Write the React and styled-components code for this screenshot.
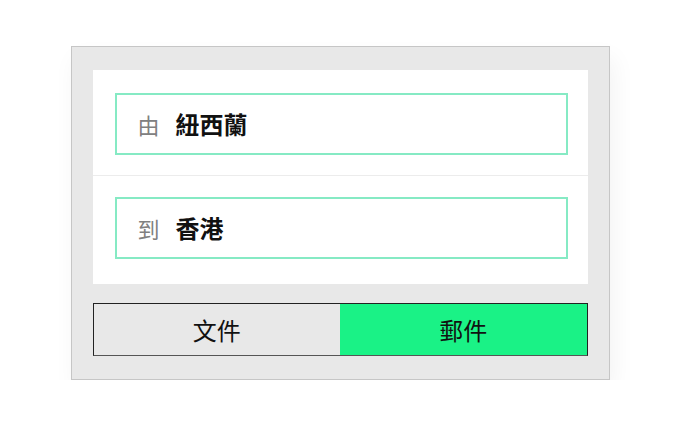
import React, { useState } from 'react';
import styled, { createGlobalStyle } from 'styled-components';

const GlobalStyle = createGlobalStyle`
    html, body {
        margin: 0;
        padding: 0;
        background: #ffffff;
    }
    body {
        font-family: "Noto Sans CJK TC", "Noto Sans", sans-serif;
    }
`

function App()
{
    const [type, setType] = useState('mail');

    return (
        <Page>
            <GlobalStyle />
            <Card>
                <Panel>
                    <Row>
                        <Field>
                            <Label>由</Label>
                            <Value>紐西蘭</Value>
                        </Field>
                    </Row>
                    <Row last>
                        <Field>
                            <Label>到</Label>
                            <Value>香港</Value>
                        </Field>
                    </Row>
                </Panel>
                <Toggle>
                    <ToggleButton active={type === 'doc'} onClick={() => setType('doc')}>文件</ToggleButton>
                    <ToggleButton active={type === 'mail'} onClick={() => setType('mail')}>郵件</ToggleButton>
                </Toggle>
            </Card>
        </Page>
    );
}

export default App;

const Page = styled.div`
    padding-top: 46px;
    display: flex;
    justify-content: center;
`

const Card = styled.div`
    box-sizing: border-box;
    width: 539px;
    padding: 23px 21px;
    background-color: #e8e8e8;
    border: 1px solid #c6c6c6;
    box-shadow: 4px 12px 22px rgba(0, 0, 0, 0.05);
    display: flex;
    flex-direction: column;
    gap: 19px;
`

const Panel = styled.div`
    background-color: #ffffff;
    display: flex;
    flex-direction: column;
`

const Row = styled.div`
    padding: ${props => props.last ? '21px 20px 25px 22px' : '23px 20px 20px 22px'};
    border-bottom: ${props => props.last ? 'none' : '1px solid #ececec'};
`

const Field = styled.div`
    box-sizing: border-box;
    height: 62px;
    border: 2px solid #86eac4;
    display: flex;
    align-items: center;
    padding-left: 21px;
    gap: 16px;
`

const Label = styled.span`
    font-size: 22px;
    color: #808080;
    line-height: 1;
`

const Value = styled.span`
    font-size: 24px;
    font-weight: bold;
    color: #111111;
    line-height: 1;
`

const Toggle = styled.div`
    display: flex;
    height: 53px;
    box-sizing: border-box;
    border: 1px solid #222222;
    border-bottom-color: #555555;
`

const ToggleButton = styled.button`
    flex: 1;
    border: none;
    margin: 0;
    padding: 0;
    background-color: ${props => props.active ? '#1af286' : '#e8e8e8'};
    font-family: "Noto Sans CJK TC", "Noto Sans", sans-serif;
    font-size: 24px;
    font-weight: 400;
    color: #111111;
    cursor: pointer;
`
